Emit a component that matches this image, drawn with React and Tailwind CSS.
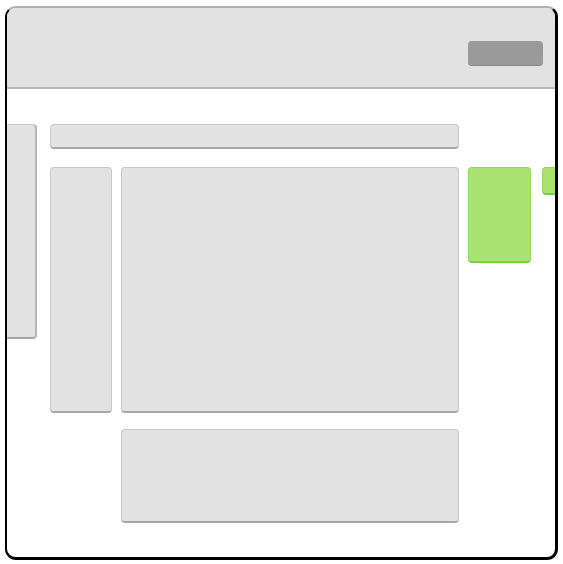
export default function App() {
  const panel = "bg-[#e2e2e2] border border-[#c9c9c9] border-b-2 border-b-[#a9a9a9] rounded-[4px]";
  const green = "bg-[#abe373] border border-[#92d862] border-b-2 border-b-[#7fcb50] rounded-[4px]";
  return (
    <div className="w-[563px] h-[564px] bg-white pl-[5px] pt-[6px]">
      <div className="w-[553px] h-[554px] rounded-[11px] border-[3px] border-black border-t-[#b0b0b0] border-t-2 border-l-2 overflow-hidden bg-white flex flex-col">
        <div className="h-[81px] bg-[#e2e2e2] border-b-2 border-[#b8b8b8] flex justify-end items-start pt-[33px] pr-[12px] shrink-0">
          <div className="w-[75px] h-[25px] rounded-[4px] bg-[#9a9a9a] border-b border-[#8a8a8a]"></div>
        </div>
        <div className="flex items-start pt-[35px]">
          <div className="w-[30px] h-[215px] shrink-0 bg-[#e2e2e2] border border-l-0 border-[#c9c9c9] border-b-2 border-b-[#a9a9a9] border-r-2 border-r-[#b5b5b5] rounded-r-[4px]"></div>
          <div className="ml-[13px] w-[409px] shrink-0 flex flex-col">
            <div className={`h-[25px] ${panel}`}></div>
            <div className="mt-[18px] flex">
              <div className={`w-[62px] h-[246px] ${panel}`}></div>
              <div className={`ml-[9px] w-[338px] h-[246px] ${panel}`}></div>
            </div>
            <div className={`mt-[16px] ml-[71px] w-[338px] h-[94px] ${panel}`}></div>
          </div>
          <div className={`ml-[9px] mt-[43px] w-[63px] h-[96px] shrink-0 ${green}`}></div>
          <div className={`ml-[11px] mt-[43px] flex-1 h-[28px] border-r-0 rounded-r-none ${green}`}></div>
        </div>
      </div>
    </div>
  );
}
